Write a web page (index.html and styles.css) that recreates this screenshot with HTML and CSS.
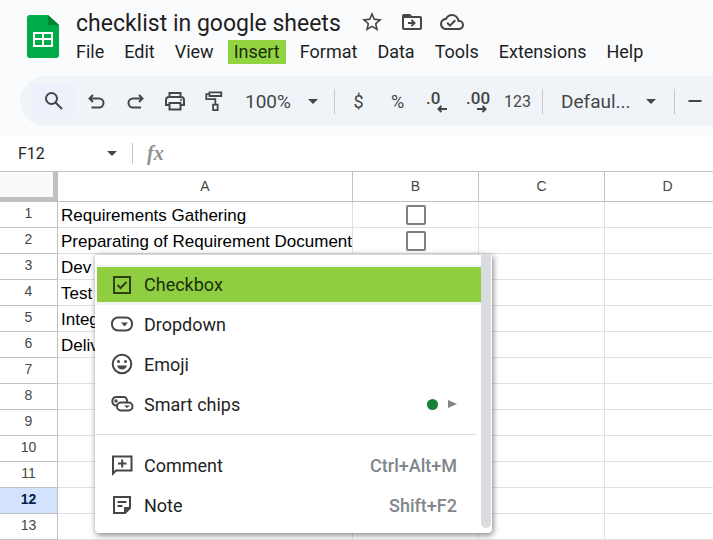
FILE: index.html
```html
<!DOCTYPE html>
<html lang="en">
<head>
<meta charset="utf-8">
<title>checklist in google sheets</title>
<link rel="stylesheet" href="styles.css">
</head>
<body>
<header class="header">
  <svg class="logo" viewBox="0 0 32 43" aria-hidden="true">
    <path fill="#00ac47" d="M3 0h18l11 10v30a3 3 0 0 1-3 3H3a3 3 0 0 1-3-3V3a3 3 0 0 1 3-3z"/>
    <path fill="#00832d" d="M21 0l11 10H21z"/>
    <path fill="#fff" fill-rule="evenodd" d="M6 17h20v15H6zM8 19v4h7v-4zM17 19v4h7v-4zM8 25v5h7v-5zM17 25v5h7v-5z"/>
  </svg>
  <div class="heading">
    <div class="title-row">
      <h1 class="title">checklist in google sheets</h1>
      <button class="title-button" aria-label="Star"><svg viewBox="0 0 24 24"><path d="M22 9.2l-7.2-.6L12 2 9.2 8.600 2 9.200l5.500 4.700L5.800 21 12 17.300l6.200 3.700-1.600-7.100zM12 15.400l-3.800 2.300 1-4.300-3.300-2.900 4.400-.4L12 6.100l1.700 4 4.400.4-3.300 2.900 1 4.300z"/></svg></button>
      <button class="title-button" aria-label="Move"><svg viewBox="0 0 24 24"><path d="M20 6h-8l-2-2H4c-1.100 0-2 .9-2 2v12c0 1.100.9 2 2 2h16c1.100 0 2-.9 2-2V8c0-1.100-.9-2-2-2zm0 12H4V8h16zM12 9.200l3.900 3.800-3.900 3.800-1.300-1.300 1.500-1.600H8v-1.800h4.200l-1.500-1.600z"/></svg></button>
      <button class="title-button" aria-label="Document status"><svg viewBox="0 0 24 24"><path d="M19.350 10.040A7.490 7.490 0 0 0 12 4C9.110 4 6.600 5.640 5.350 8.040A5.994 5.994 0 0 0 0 14c0 3.310 2.690 6 6 6h13c2.760 0 5-2.240 5-5 0-2.640-2.050-4.780-4.650-4.960zM19 18H6c-2.210 0-4-1.790-4-4 0-2.050 1.530-3.760 3.560-3.970l1.070-.11.500-.95A5.469 5.469 0 0 1 12 6c2.620 0 4.880 1.860 5.390 4.430l.3 1.500 1.530.11A2.980 2.980 0 0 1 22 15c0 1.650-1.350 3-3 3zm-9-3.820l-2.090-2.090L6.500 13.500 10 17l6.010-6.010-1.410-1.410z"/></svg></button>
    </div>
    <nav class="menubar">
      <button>File</button>
      <button>Edit</button>
      <button>View</button>
      <button class="active">Insert</button>
      <button>Format</button>
      <button>Data</button>
      <button>Tools</button>
      <button>Extensions</button>
      <button>Help</button>
    </nav>
  </div>
</header>

<div class="toolbar" role="toolbar">
  <button class="search" aria-label="Search the menus"><svg viewBox="0 0 20 20"><g class="line"><circle cx="7.500" cy="7.500" r="5.500"/><path d="M11.500 11.500L18 18"/></g></svg></button>
  <button aria-label="Undo"><svg viewBox="0 0 20 20"><path class="line" d="M6 4L2.500 7.500 6 11M2.500 7.500H12a4.500 4.500 0 0 1 0 9H4.500"/></svg></button>
  <button aria-label="Redo"><svg viewBox="0 0 20 20"><path class="line" d="M13 4l3.500 3.500L13 11M16.500 7.500H7a4.500 4.500 0 0 0 0 9h8"/></svg></button>
  <button aria-label="Print"><svg viewBox="0 0 20 20"><path class="line" d="M4.500 6V2h11v4M4.500 14H1V9a3 3 0 0 1 3-3h12a3 3 0 0 1 3 3v5h-3.500M4.500 12h11v6.500h-11z"/><circle cx="16" cy="9" r="1"/></svg></button>
  <button aria-label="Paint format"><svg viewBox="0 0 20 22"><path class="line" d="M5 1.500h13v4H5zM5 3.500H1.500V9h10v6M9 15h5v6H9z"/></svg></button>
  <button class="zoom">100%<i class="caret"></i></button>
  <span class="divider after-zoom"></span>
  <button aria-label="Currency">$</button>
  <button aria-label="Percent">%</button>
  <button class="decimal" aria-label="Decrease decimal places">.0<svg class="arrow" viewBox="0 0 10 8"><path class="line" d="M10 4H1M4.500 1l-3 3 3 3"/></svg></button>
  <button class="decimal" aria-label="Increase decimal places">.00<svg class="arrow" viewBox="0 0 10 8"><path class="line" d="M0 4h9M5.500 1l3 3-3 3"/></svg></button>
  <button class="number">123</button>
  <span class="divider"></span>
  <button class="font">Defaul...<i class="caret"></i></button>
  <span class="divider"></span>
  <button aria-label="Decrease font size"><svg viewBox="0 0 20 20"><path class="line" d="M3.500 10h13"/></svg></button>
</div>

<div class="formula-bar">
  <button class="name-box">F12<i class="caret"></i></button>
  <span class="divider"></span>
  <span class="fx">fx</span>
</div>

<main class="sheet">
  <table class="grid">
    <colgroup><col class="col-head"><col class="col-a"><col class="col"><col class="col"><col class="col"></colgroup>
    <thead>
      <tr><td class="corner"></td><th>A</th><th>B</th><th>C</th><th>D</th></tr>
    </thead>
    <tbody>
      <tr><th>1</th><td>Requirements Gathering</td><td class="check"><input type="checkbox" aria-label="Requirements Gathering"></td><td></td><td></td></tr>
      <tr><th>2</th><td>Preparating of Requirement Document</td><td class="check"><input type="checkbox" aria-label="Preparating of Requirement Document"></td><td></td><td></td></tr>
      <tr><th>3</th><td>Dev</td><td></td><td></td><td></td></tr>
      <tr><th>4</th><td>Test</td><td></td><td></td><td></td></tr>
      <tr><th>5</th><td>Integ</td><td></td><td></td><td></td></tr>
      <tr><th>6</th><td>Deliv</td><td></td><td></td><td></td></tr>
      <tr><th>7</th><td></td><td></td><td></td><td></td></tr>
      <tr><th>8</th><td></td><td></td><td></td><td></td></tr>
      <tr><th>9</th><td></td><td></td><td></td><td></td></tr>
      <tr><th>10</th><td></td><td></td><td></td><td></td></tr>
      <tr><th>11</th><td></td><td></td><td></td><td></td></tr>
      <tr class="selected"><th>12</th><td></td><td></td><td></td><td></td></tr>
      <tr><th>13</th><td></td><td></td><td></td><td></td></tr>
    </tbody>
  </table>

  <div class="menu" role="menu">
    <div class="menu-list">
      <button class="menu-item highlighted" role="menuitem"><svg viewBox="0 0 24 24"><path class="line" d="M4 4h16v16H4zM7.500 12l3 3 6-6"/></svg>Checkbox</button>
      <button class="menu-item" role="menuitem"><svg viewBox="0 0 24 24"><rect class="line" x="2" y="5.500" width="20" height="13" rx="6"/><path d="M11 10.500h7l-3.500 4z"/></svg>Dropdown</button>
      <button class="menu-item" role="menuitem"><svg viewBox="0 0 24 24"><circle class="line" cx="12" cy="12" r="9.300"/><circle cx="8.500" cy="9.500" r="1.500"/><circle cx="15.500" cy="9.500" r="1.500"/><path d="M7 13.500h10c-.8 2.600-2.600 4-5 4s-4.200-1.400-5-4z"/></svg>Emoji</button>
      <button class="menu-item" role="menuitem"><svg viewBox="0 0 24 24"><path class="line" d="M8 13.500H6A4.300 4.300 0 0 1 6 5h7.500a3.500 3.500 0 0 1 3.500 3.500V10M11 10.500h7.500a4 4 0 0 1 0 8H11a4 4 0 0 1 0-8z"/><circle cx="6" cy="9" r="1.700"/><path d="M14 13.500h6l-3 2.500z"/></svg>Smart chips<span class="new-dot"></span><span class="submenu"></span></button>
      <hr>
      <button class="menu-item" role="menuitem"><svg viewBox="0 0 24 24"><path class="line" d="M3 20.500V3.500h18.500v14H6zM12.200 6.500v8M8 10.500h8.500"/></svg>Comment<kbd>Ctrl+Alt+M</kbd></button>
      <button class="menu-item" role="menuitem"><svg viewBox="0 0 24 24"><path class="line" d="M4 4h16v11l-5 5H4zM7.500 9h9M7.500 13h5"/><path d="M14 20v-6h6z"/></svg>Note<kbd>Shift+F2</kbd></button>
    </div>
    <div class="scrollbar"></div>
  </div>
</main>
</body>
</html>
```
FILE: styles.css
```css
* { box-sizing: border-box; }

body {
  margin: 0;
  overflow: hidden;
  background: #fff;
  color: #1f1f1f;
  font-family: Roboto, "Liberation Sans", sans-serif;
}

button {
  padding: 0;
  border: 0;
  background: none;
  color: inherit;
  font: inherit;
  white-space: nowrap;
}

svg { display: block; fill: #444746; }
.line { fill: none; stroke: #444746; stroke-width: 2; }

/* Header */
.header {
  display: flex;
  gap: 10px;
  height: 76px;
  padding: 8px 0 0 27px;
  background: #f9fbfd;
}
.logo { width: 32px; height: 43px; margin-top: 7px; }
.title-row { display: flex; height: 32px; padding-left: 7px; }
.title { margin: 0 19px 0 0; font-size: 23px; font-weight: 400; line-height: 32px; white-space: nowrap; }
.title-button { width: 24px; height: 28px; margin-right: 16px; }
.title-button svg { width: 24px; height: 24px; }
.menubar { display: flex; gap: 8px; padding-left: 1px; font-size: 18px; }
.menubar button { height: 24px; padding: 0 6px; line-height: 24px; }
.menubar .active { background: #92d341; color: #1c2d0c; }

/* Toolbar */
.toolbar {
  display: flex;
  align-items: center;
  height: 50px;
  margin-left: 20px;
  padding-left: 11px;
  overflow: hidden;
  border-radius: 25px 0 0 25px;
  background: #f0f4f9;
  color: #444746;
  font-size: 18px;
  box-shadow: 0 0 0 60px #f9fbfd;
}
.toolbar button { display: flex; flex: none; align-items: center; justify-content: center; width: 39px; height: 34px; }
.toolbar svg { width: 20px; height: 20px; }
.toolbar .search { width: 46px; background: #edf1fb; }
.toolbar .zoom { width: 73px; margin: 0 16px 0 12px; justify-content: space-between; font-size: 19px; }
.toolbar .font { width: 95px; margin: 0 18px; justify-content: space-between; font-size: 19px; }
.toolbar .number { width: 45px; padding-right: 4px; font-size: 16px; }
.toolbar .decimal { position: relative; width: 40px; padding: 0 0 6px 9px; justify-content: flex-start; font-size: 17px; font-weight: 500; }
.toolbar .arrow { position: absolute; right: 10px; bottom: 5px; width: 10px; height: 8px; }
.caret { border: 5px solid transparent; border-top-color: #444746; border-bottom: 0; }
.divider { flex: none; width: 1px; height: 25px; background: #c7c7c7; }
.after-zoom { margin-right: 4px; }

/* Formula bar */
.formula-bar {
  position: relative;
  display: flex;
  align-items: center;
  height: 35px;
  margin-top: 10px;
  padding-left: 18px;
  background: #fff;
}
.formula-bar .divider { height: 21px; }
.name-box { display: flex; align-items: center; justify-content: space-between; width: 99px; margin-right: 15px; font-size: 16px; }
.fx { margin-left: 14px; color: #919191; font: italic bold 20px "Liberation Serif", serif; }

/* Grid */
.sheet { position: relative; background: #fff; }
.grid { width: 731px; border-top: 1px solid #c0c0c0; border-spacing: 0; table-layout: fixed; font-family: "Liberation Sans", sans-serif; }
.col-head { width: 58px; }
.col-a { width: 295px; }
.col { width: 126px; }
.grid th {
  height: 26px;
  padding: 0 0 3px;
  border: solid #c0c0c0;
  border-width: 0 1px 1px 0;
  color: #444746;
  font-size: 14px;
  font-weight: 400;
  line-height: 21px;
}
.grid thead th { height: 30px; padding: 0; }
.grid td {
  height: 26px;
  padding: 2px 3px 0;
  border: solid #e1e1e1;
  border-width: 0 1px 1px 0;
  color: #000;
  font-size: 17px;
  line-height: 23px;
  white-space: nowrap;
}
.grid .corner { border: solid #c0c0c0; border-width: 0 5px 5px 0; background: #f8f9fa; }
.grid .selected th { background: #d3e3fd; color: #041e49; font-weight: 700; }
.grid .check { padding-top: 0; text-align: center; }
.check input {
  display: block;
  width: 20px;
  height: 20px;
  margin: 0 auto;
  border: 2px solid #808080;
  border-radius: 2px;
  appearance: none;
}

/* Insert menu */
.menu {
  position: absolute;
  top: 83px;
  left: 95px;
  display: flex;
  width: 397px;
  border-radius: 0 0 4px 4px;
  background: #fff;
  box-shadow: 1px 2px 6px rgba(0, 0, 0, .5);
}
.menu-list { flex: 1; padding: 10px 5px 8px 1px; border-top: 1px solid #dadce0; }
.menu-item {
  display: flex;
  align-items: center;
  width: 100%;
  height: 40px;
  padding: 0 19px 0 14px;
  font-size: 18px;
}
.menu-item svg { width: 24px; height: 24px; margin-right: 10px; }
.highlighted {
  width: calc(100% + 4px);
  height: 35px;
  margin: 2px 0 2px 1px;
  padding-left: 13px;
  background: #8ece40;
  color: #1c2d0c;
  box-shadow: 0 -2px #f1f3f4, 0 3px #f1f3f4;
}
.highlighted .line { stroke: #2c4212; }
.menu hr { margin: 10px 0; border: 0; border-top: 1px solid #dadce0; }
.menu kbd { margin-left: auto; color: #80868b; font: 500 18px Roboto, sans-serif; }
.new-dot { width: 11px; height: 11px; margin: 0 10px 0 auto; border-radius: 50%; background: #188038; }
.submenu { border: 4px solid transparent; border-right: 0; border-left: 9px solid #80868b; }
.scrollbar { width: 10px; margin: 0 1px 5px 0; border-radius: 0 0 5px 5px; background: #dadce0; }
```
